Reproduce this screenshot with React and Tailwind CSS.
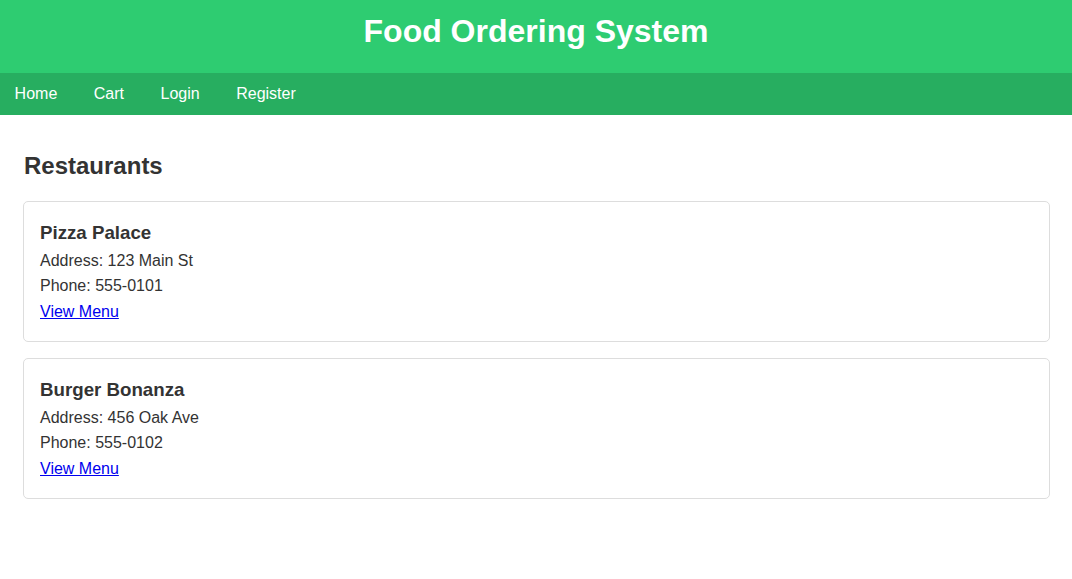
import React from 'react';

const restaurants = [
  { id: 1, name: 'Pizza Palace', address: '123 Main St', phone: '555-0101' },
  { id: 2, name: 'Burger Bonanza', address: '456 Oak Ave', phone: '555-0102' },
];

const RestaurantCard = ({ restaurant }) => {
  return (
    <div className="border border-[#ddd] rounded-[5px] px-4 pt-4 pb-[16.5px] mb-4 bg-white">
      <h3 className="text-[18.72px] font-bold leading-[1.6]">{restaurant.name}</h3>
      <p className="leading-[1.6]">Address: {restaurant.address}</p>
      <p className="leading-[1.6]">Phone: {restaurant.phone}</p>
      <a href="#" className="text-[#0000ee] underline leading-[1.6] block w-fit">
        View Menu
      </a>
    </div>
  );
};

const App = () => {
  return (
    <div className="min-h-screen bg-white text-[#333] text-base font-['Liberation_Sans',Arial,sans-serif]">
      <header className="bg-[#2ecc71] h-[73px] pt-[13.3px] text-center">
        <h1 className="text-[32px] font-bold text-white leading-[36.8px]">Food Ordering System</h1>
      </header>

      <nav className="bg-[#27ae60] h-[42px] flex items-center pl-[14.6px] gap-[36.5px]">
        <a href="#" className="text-white leading-[18.4px]">Home</a>
        <a href="#" className="text-white leading-[18.4px]">Cart</a>
        <a href="#" className="text-white leading-[18.4px]">Login</a>
        <a href="#" className="text-white leading-[18.4px]">Register</a>
      </nav>

      <main className="pl-[23px] pr-[22px] pt-[37px]">
        <h2 className="text-2xl font-bold leading-[27.6px] pl-px mb-[21px]">Restaurants</h2>
        {restaurants.map((r) => (
          <RestaurantCard key={r.id} restaurant={r} />
        ))}
      </main>
    </div>
  );
};

export default App;
